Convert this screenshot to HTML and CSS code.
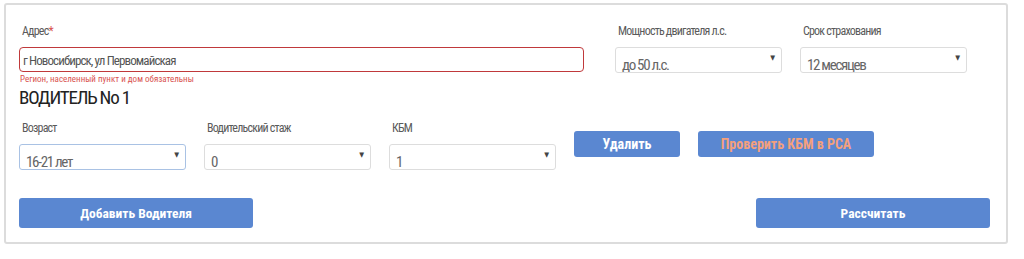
FILE: index.html
```html
<!DOCTYPE html>
<html>
<head>
    <title>Калькулятор ОСАГО</title>
    <link rel="stylesheet" href="styles.css">
</head>
<body>
    <div class="calc-card">
        <div class="top-row">
            <div class="field field-address">
                <label class="field-label">Адрес<span class="req">*</span></label>
                <div class="text-input invalid">г Новосибирск, ул Первомайская</div>
                <div class="error-text">Регион, населенный пункт и дом обязательны</div>
            </div>
            <div class="field field-select">
                <label class="field-label">Мощность двигателя л.с.</label>
                <div class="select-box"><span class="select-value">до 50 л.с.</span></div>
            </div>
            <div class="field field-select">
                <label class="field-label">Срок страхования</label>
                <div class="select-box"><span class="select-value">12 месяцев</span></div>
            </div>
        </div>

        <h2 class="driver-title">ВОДИТЕЛЬ No 1</h2>

        <div class="driver-row">
            <div class="field field-select">
                <label class="field-label">Возраст</label>
                <div class="select-box focused"><span class="select-value">16-21 лет</span></div>
            </div>
            <div class="field field-select">
                <label class="field-label">Водительский стаж</label>
                <div class="select-box"><span class="select-value">0</span></div>
            </div>
            <div class="field field-select">
                <label class="field-label">КБМ</label>
                <div class="select-box"><span class="select-value">1</span></div>
            </div>
            <button class="btn btn-remove">Удалить</button>
            <button class="btn btn-check">Проверить КБМ в РСА</button>
        </div>

        <div class="bottom-row">
            <button class="btn btn-wide">Добавить Водителя</button>
            <button class="btn btn-wide">Рассчитать</button>
        </div>
    </div>
</body>
</html>
```

FILE: styles.css
```css
body { margin: 0; padding: 3px 16px 0 4px; font-family: "Roboto", "DejaVu Sans Condensed", sans-serif; font-stretch: 75%; color: #555; background: #fff; }
.calc-card { box-sizing: border-box; width: 1004px; height: 241px; border: 2px solid #dcdcdc; border-radius: 3px; padding: 0 16px 0 13px; }
.top-row { display: flex; padding-top: 18px; }
.field { display: flex; flex-direction: column; }
.field-address { width: 565px; margin-right: 31px; }
.field-select { width: 167px; margin-right: 18px; }
.field-label { font-size: 12px; letter-spacing: -0.8px; line-height: 16px; height: 24px; padding-left: 3px; color: #5a5a5a; }
.req { color: #d9534f; }
.text-input { height: 25px; box-sizing: border-box; border: 1px solid #c0393b; border-radius: 4px; font-size: 13px; letter-spacing: -0.9px; line-height: 25px; padding-left: 3px; color: #555; }
.error-text { font-size: 9px; line-height: 14px; color: #d9534f; padding-left: 1px; }
.select-box { position: relative; height: 26px; box-sizing: border-box; border: 1px solid #ddd; border-radius: 3px; overflow: hidden; padding: 0 20px 0 6px; font-size: 15px; letter-spacing: -1.3px; line-height: 35px; }
.select-box::after { content: "▼"; position: absolute; right: 6px; top: 0; line-height: 20px; font-size: 7px; letter-spacing: 0; color: #444; }
.select-box.focused { border-color: #a9c2e4; }
.select-value { color: #666; white-space: nowrap; }
.driver-title { margin: 0; font-size: 19px; letter-spacing: -1.2px; line-height: 24px; font-weight: normal; color: #222; }
.driver-row { display: flex; align-items: flex-start; padding-top: 10px; }
.btn { border: none; border-radius: 3px; background: #5a87d1; color: #fff; font-family: inherit; font-stretch: inherit; font-weight: bold; font-size: 14px; height: 26px; padding: 0; cursor: pointer; }
.btn-remove { width: 106px; margin-top: 11px; margin-right: 18px; }
.btn-check { width: 176px; margin-top: 11px; color: #f4a07c; }
.bottom-row { display: flex; justify-content: space-between; padding-top: 28px; }
.btn-wide { width: 234px; height: 30px; font-size: 13.5px; }
```
